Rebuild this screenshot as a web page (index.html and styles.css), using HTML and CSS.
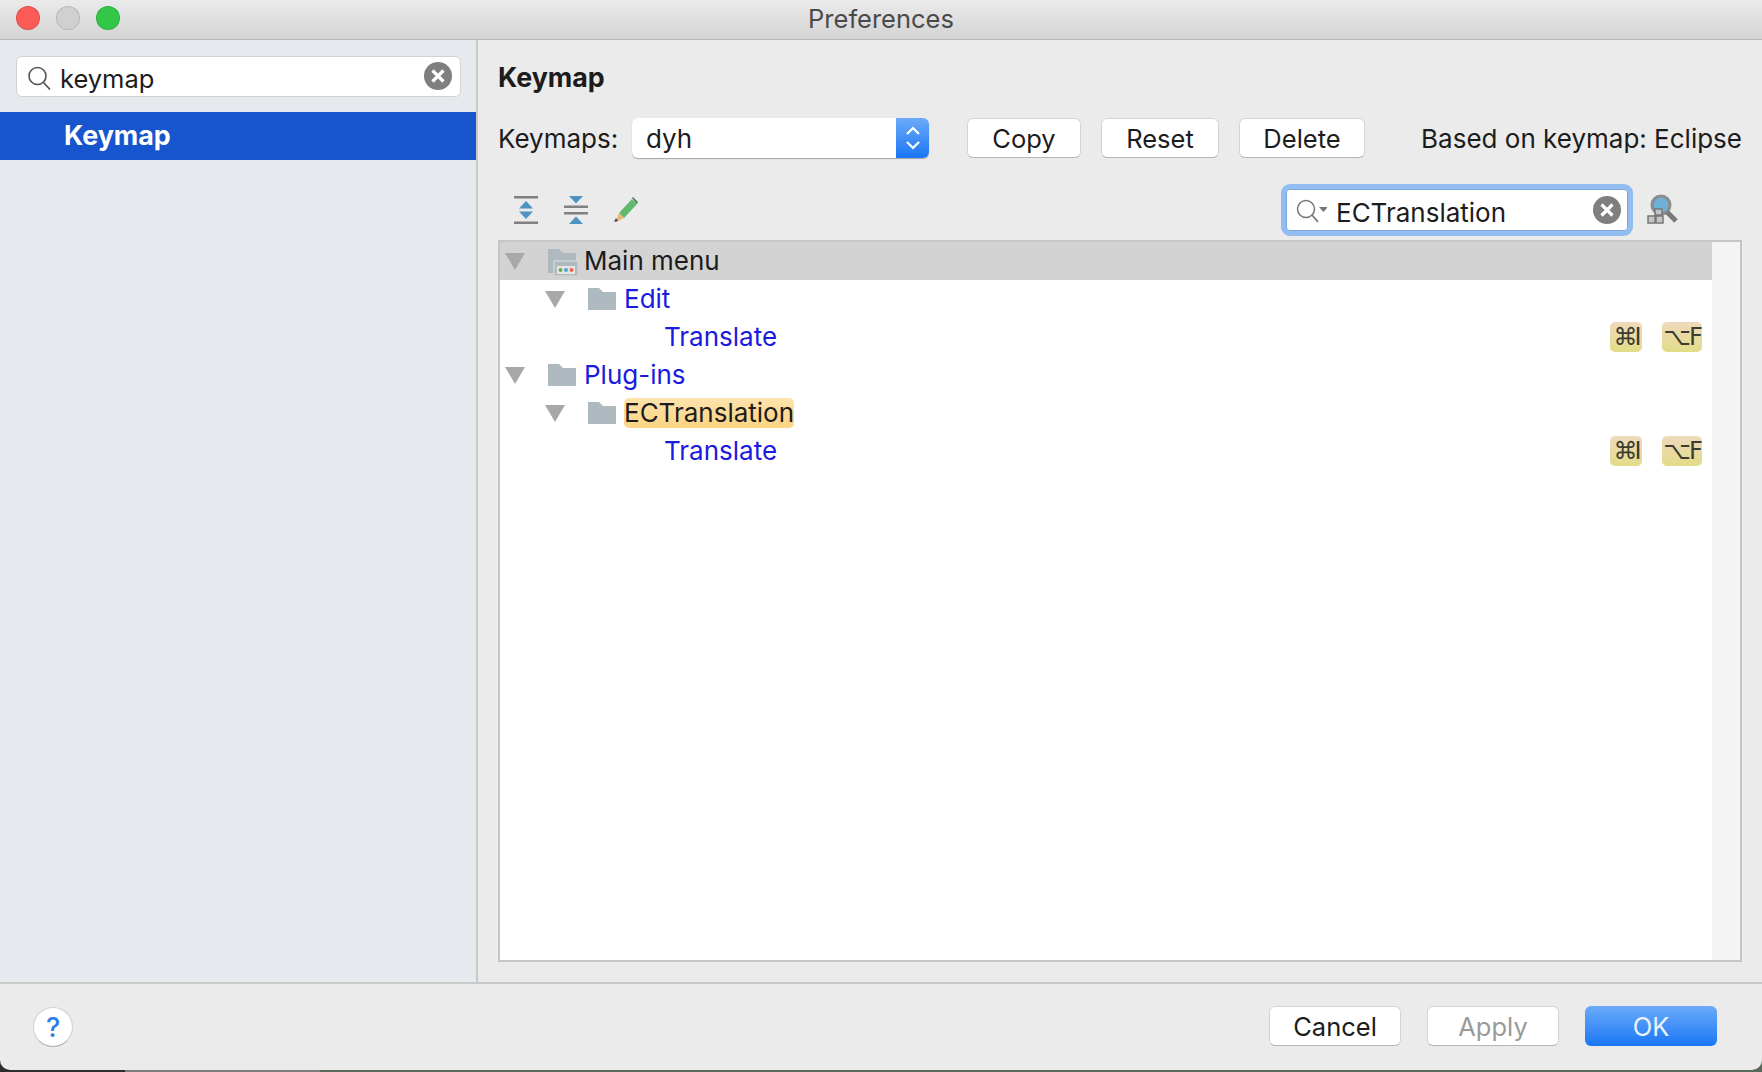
FILE: index.html
```html
<!DOCTYPE html>
<html lang="en">
<head>
  <meta charset="UTF-8"/>
  <title>Preferences</title>
  <link rel="stylesheet" href="styles.css">
</head>
<body>
  <div class="window">
    <div class="titlebar">
      <div class="lights">
        <span class="light red"></span>
        <span class="light grey"></span>
        <span class="light green"></span>
      </div>
      <div class="title">Preferences</div>
    </div>

    <div class="content">
      <div class="sidebar">
        <div class="side-search">
          <svg class="glass" width="24" height="26" viewBox="0 0 24 26"><circle cx="10.5" cy="11" r="8.5" fill="none" stroke="#555" stroke-width="1.6"/><path d="M16.5 17.5l6.5 7" stroke="#555" stroke-width="1.8" fill="none"/></svg>
          <span class="side-search-text">keymap</span>
          <svg class="clear" width="28" height="28" viewBox="0 0 28 28"><circle cx="14" cy="14" r="14" fill="#7f7f7f"/><path d="M8.5 8.5l11 11M19.5 8.5l-11 11" stroke="#fff" stroke-width="3.2"/></svg>
        </div>
        <div class="side-item">Keymap</div>
      </div>

      <div class="main">
        <h1>Keymap</h1>

        <div class="keymap-row">
          <span class="keymap-label">Keymaps:</span>
          <div class="select">
            <span class="select-value">dyh</span>
            <span class="select-arrows">
              <svg width="16" height="28" viewBox="0 0 16 28"><path d="M2 10l6-6 6 6M2 18l6 6 6-6" fill="none" stroke="#fff" stroke-width="2.2"/></svg>
            </span>
          </div>
          <button class="btn btn-copy">Copy</button>
          <button class="btn btn-reset">Reset</button>
          <button class="btn btn-delete">Delete</button>
          <span class="based">Based on keymap: Eclipse</span>
        </div>

        <div class="tool-row">
          <svg class="tool" width="24" height="28" viewBox="0 0 24 28"><path d="M0 0h24v2.400H0zM0 25.600h24v2.400H0z" fill="#808080"/><path d="M12 5l7 7.500H5zM5 15.500h14L12 23z" fill="#4f93c4"/></svg>
          <svg class="tool" width="24" height="28" viewBox="0 0 24 28"><path d="M0 9.500h24v2.400H0zM0 16.100h24v2.400H0z" fill="#808080"/><path d="M5 0h14l-7 7.500zM12 20.500l7 7.500H5z" fill="#4f93c4"/></svg>
          <svg class="tool" width="24" height="26" viewBox="0 0 24 26"><path d="M5 16L18 2l5 5-13 14z" fill="#62b96e"/><path d="M18 1l1-1 5 5-1 2z" fill="#4a7a55"/><path d="M5 16l5 5-8 4z" fill="#eeb56e"/><path d="M0 25l2-4 2 3z" fill="#444"/></svg>
          <div class="tool-spacer"></div>
          <div class="filter">
            <svg class="filter-glass" width="31" height="26" viewBox="0 0 31 26"><circle cx="10" cy="11" r="8.500" fill="none" stroke="#777" stroke-width="1.500"/><path d="M16 17l6 7" stroke="#777" stroke-width="1.800"/><path d="M23 9h9l-4.500 5z" fill="#777"/></svg>
            <span class="filter-text">ECTranslation</span>
            <svg class="clear" width="28" height="28" viewBox="0 0 28 28"><circle cx="14" cy="14" r="14" fill="#7f7f7f"/><path d="M8.500 8.500l11 11M19.500 8.500l-11 11" stroke="#fff" stroke-width="3.200"/></svg>
          </div>
          <svg class="find-shortcut" width="32" height="32" viewBox="0 0 32 32"><circle cx="15" cy="11" r="9" fill="#6fb0d6" stroke="#8c8c8c" stroke-width="3"/><path d="M21 18l9 9" stroke="#7a7a7a" stroke-width="5"/><path d="M9 15h7v6H9zM2 22h7v7H2zM10 22h7v7h-7z" fill="#c4c4c4" stroke="#777" stroke-width="1.500"/></svg>
        </div>

        <div class="tree">
          <div class="tree-list">
            <div class="tree-row selected">
              <span class="arrow"></span>
              <svg class="folder folder-menu" width="30" height="28" viewBox="0 0 30 28"><path d="M0 0h11l4 4h13v20H0z" fill="#afb9c0"/><path d="M6 12h24v15H6z" fill="#afb9c0" stroke="#d3d3d3" stroke-width="1.500"/><path d="M7 15h22v11H7z" fill="#afb9c0"/><path d="M9 17h18v8H9z" fill="#e6e6e6"/><circle cx="12.500" cy="21" r="2" fill="#6eb04d"/><circle cx="18" cy="21" r="2" fill="#4fa6df"/><circle cx="23.500" cy="21" r="2" fill="#e9683a"/></svg>
              <span class="label plain">Main menu</span>
            </div>
            <div class="tree-row level-1">
              <span class="arrow"></span>
              <svg class="folder" width="28" height="22" viewBox="0 0 28 22"><path d="M0 0h11l4 4h13v18H0z" fill="#afb9c0"/></svg>
              <span class="label">Edit</span>
            </div>
            <div class="tree-row level-2">
              <span class="label">Translate</span>
              <span class="shortcuts"><span class="key key-cmd">⌘I</span><span class="key key-alt">⌥F</span></span>
            </div>
            <div class="tree-row">
              <span class="arrow"></span>
              <svg class="folder" width="28" height="22" viewBox="0 0 28 22"><path d="M0 0h11l4 4h13v18H0z" fill="#afb9c0"/></svg>
              <span class="label">Plug-ins</span>
            </div>
            <div class="tree-row level-1">
              <span class="arrow"></span>
              <svg class="folder" width="28" height="22" viewBox="0 0 28 22"><path d="M0 0h11l4 4h13v18H0z" fill="#afb9c0"/></svg>
              <span class="label plain found">ECTranslation</span>
            </div>
            <div class="tree-row level-2">
              <span class="label">Translate</span>
              <span class="shortcuts"><span class="key key-cmd">⌘I</span><span class="key key-alt">⌥F</span></span>
            </div>
          </div>
          <div class="tree-scroll"></div>
        </div>
      </div>
    </div>

    <div class="footer">
      <span class="help">?</span>
      <div class="footer-buttons">
        <button class="btn btn-foot">Cancel</button>
        <button class="btn btn-foot disabled">Apply</button>
        <button class="btn btn-foot primary">OK</button>
      </div>
    </div>
  </div>
</body>
</html>
```

FILE: styles.css
```css
* {
  box-sizing: border-box;
}
body {
  margin: 0;
  height: 1072px;
  overflow: hidden;
  background: linear-gradient(90deg, #2e2e2e 125px, #7d7d7d 125px, #7d7d7d 320px, #56695a 320px);
  font-family: Inter, "Noto Sans", sans-serif;
  font-size: 26px;
  color: #1c1c1c;
}
.window {
  height: 1070px;
  display: flex;
  flex-direction: column;
  background-color: #ebebeb;
  border-radius: 0 0 10px 10px;
  overflow: hidden;
}

/* title bar */
.titlebar {
  height: 40px;
  flex-shrink: 0;
  position: relative;
  display: flex;
  align-items: center;
  justify-content: center;
  background: linear-gradient(#ebebeb, #d4d4d4);
  border-bottom: 1px solid #b5b5b5;
}
.lights {
  position: absolute;
  left: 16px;
  top: 6px;
  display: flex;
  gap: 16px;
}
.light {
  width: 24px;
  height: 24px;
  border-radius: 50%;
  border: 1px solid rgba(0, 0, 0, 0.12);
}
.red {
  background-color: #fc5b57;
}
.grey {
  background-color: #d0d0d0;
}
.green {
  background-color: #33c748;
}
.title {
  color: #4a4a4a;
  font-size: 25.5px;
  margin-top: -2px;
}

.content {
  flex: 1;
  display: flex;
  min-height: 0;
}

/* left side */
.sidebar {
  width: 478px;
  flex-shrink: 0;
  background-color: #e6eaee;
  border-right: 2px solid #c8c8c8;
  padding-top: 16px;
}
.side-search {
  margin: 0 15px 0 16px;
  height: 41px;
  display: flex;
  align-items: center;
  background-color: white;
  border: 1px solid #d2d2d2;
  border-radius: 6px;
  padding: 0 8px 0 10px;
}
.glass {
  margin-right: 9px;
  margin-top: 2px;
}
.side-search-text {
  flex: 1;
  font-size: 25.5px;
  margin-top: 3px;
}
.clear {
  margin-top: -1px;
}
.side-item {
  margin-top: 15px;
  height: 48px;
  line-height: 46px;
  background-color: #1655cd;
  color: white;
  font-weight: 700;
  font-size: 26.8px;
  padding-left: 64px;
}

/* right side */
.main {
  flex: 1;
  min-width: 0;
  padding: 21px 20px 20px 20px;
  display: flex;
  flex-direction: column;
}
h1 {
  margin: 0;
  font-size: 26.8px;
  font-weight: 700;
  line-height: 32px;
}
.keymap-row {
  margin-top: 25px;
  display: flex;
  align-items: center;
  height: 40px;
}
.keymap-label {
  width: 134px;
  margin-top: 1px;
}
.select {
  width: 297px;
  height: 40px;
  display: flex;
  background-color: white;
  border-radius: 6px;
  box-shadow: 0 1px 1px rgba(0, 0, 0, 0.3);
  overflow: hidden;
}
.select-value {
  flex: 1;
  padding-left: 14px;
  line-height: 41px;
}
.select-arrows {
  width: 33px;
  display: flex;
  align-items: center;
  justify-content: center;
  background: linear-gradient(#6cabf8, #1a76f5);
}
.btn {
  height: 40px;
  padding: 0;
  font-family: inherit;
  font-size: 25.5px;
  color: #1c1c1c;
  background-color: white;
  border: 1px solid #d4d4d4;
  border-bottom-color: #b5b5b5;
  border-radius: 6px;
}
.btn-copy {
  margin-left: 38px;
  width: 114px;
}
.btn-reset {
  margin-left: 20px;
  width: 118px;
}
.btn-delete {
  margin-left: 20px;
  width: 126px;
}
.based {
  margin-left: auto;
  white-space: nowrap;
  margin-top: 1px;
}
.tool-row {
  margin-top: 26px;
  height: 52px;
  display: flex;
  align-items: center;
  padding-left: 16px;
  gap: 26px;
}
.tool-spacer {
  flex: 1;
}
.filter {
  width: 352px;
  height: 52px;
  margin-right: -13px;
  display: flex;
  align-items: center;
  background-color: white;
  border: 5px solid #92bdf0;
  border-radius: 9px;
  box-shadow: inset 0 0 0 1px #7ba7d8;
  padding: 0 7px 0 10px;
}
.filter-glass {
  margin-right: 9px;
  margin-top: 2px;
}
.filter-text {
  flex: 1;
  margin-top: 4px;
}
.find-shortcut {
  margin-right: 64px;
}

/* tree */
.tree {
  margin-top: 4px;
  flex: 1;
  display: flex;
  min-height: 0;
  background-color: white;
  border: 2px solid #c6c6c6;
}
.tree-list {
  flex: 1;
  min-width: 0;
}
.tree-scroll {
  width: 28px;
  background-color: #f4f4f4;
}
.tree-row {
  height: 38px;
  display: flex;
  align-items: center;
  padding-left: 5px;
  color: #1a1ae0;
}
.tree-row.selected {
  background-color: #d3d3d3;
}
.level-1 {
  padding-left: 45px;
}
.level-2 {
  padding-left: 164px;
  padding-right: 10px;
}
.arrow {
  width: 0;
  height: 0;
  margin-right: 23px;
  border-left: 10px solid transparent;
  border-right: 10px solid transparent;
  border-top: 17px solid #a8a8a8;
}
.folder {
  margin-right: 8px;
  flex-shrink: 0;
}
.folder-menu {
  margin-right: 6px;
  margin-top: 4px;
}
.label {
  line-height: 30px;
  margin-top: -1px;
}
.label.plain {
  color: #1c1c1c;
}
.found {
  background: linear-gradient(#fde3ad, #fdd481);
  border-radius: 5px;
}
.shortcuts {
  margin-left: auto;
  display: flex;
  gap: 20px;
}
.key {
  height: 30px;
  border-radius: 5px;
  display: flex;
  align-items: center;
  justify-content: center;
  background: linear-gradient(#efd9bd, #e2dc88);
  color: #3c3c30;
  font-size: 24px;
  font-family: "DejaVu Sans", sans-serif;
}
.key-cmd {
  width: 32px;
  letter-spacing: -3px;
}
.key-alt {
  width: 40px;
  letter-spacing: -2px;
}

/* footer */
.footer {
  height: 88px;
  flex-shrink: 0;
  border-top: 2px solid #c9c9c9;
  display: flex;
  align-items: center;
  padding: 0 45px 0 33px;
}
.help {
  width: 40px;
  height: 40px;
  display: flex;
  align-items: center;
  justify-content: center;
  background-color: white;
  border-radius: 50%;
  border: 1px solid #cfcfcf;
  border-bottom-color: #b0b0b0;
  color: #2a7de8;
  font-size: 27px;
  font-weight: 500;
}
.footer-buttons {
  margin-left: auto;
  margin-top: -2px;
  display: flex;
  gap: 26px;
}
.btn-foot {
  width: 132px;
}
.disabled {
  color: #9a9a9a;
}
.primary {
  background: linear-gradient(#6cabf8, #1a76f5);
  color: #eaf3ff;
  border: none;
}
```
